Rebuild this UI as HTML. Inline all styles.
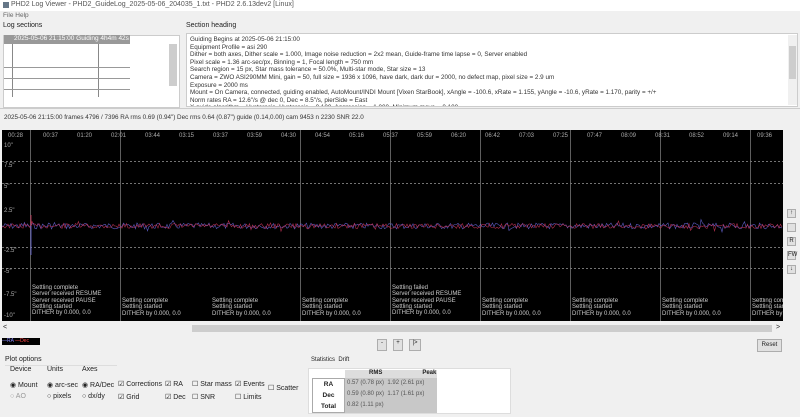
<!DOCTYPE html>
<html><head><style>
*{margin:0;padding:0;box-sizing:border-box}
body{width:800px;height:417px;background:#f0f0f0;font-family:"Liberation Sans",sans-serif;font-size:7px;color:#222;position:relative;overflow:hidden}
.a{position:absolute;white-space:nowrap}
.btn{position:absolute;background:#e1e1e1;border:1px solid #adadad;font-size:6px;text-align:center}
.tl{position:absolute;left:190px;font-size:6.3px;line-height:7.6px;color:#333;height:70px;overflow:hidden;width:595px}
.ev{position:absolute;color:#ccc;font-size:6px;line-height:6.3px;white-space:nowrap}
</style></head><body>
<div class="a" style="left:0;top:0;width:800px;height:11px;background:#fff"></div>
<div class="a" style="left:3px;top:2px;width:6px;height:6px;background:#678"></div>
<div class="a" style="left:11px;top:1px;font-size:7px;color:#555">PHD2 Log Viewer - PHD2_GuideLog_2025-05-06_204035_1.txt - PHD2 2.6.13dev2 [Linux]</div>
<div class="a" style="left:3px;top:12px;font-size:6.5px;color:#666">File Help</div>
<div class="a" style="left:3px;top:22px;font-size:7px">Log sections</div>
<div class="a" style="left:3px;top:35px;width:177px;height:73px;background:#fff;border:1px solid #ccc"></div>
<div class="a" style="left:4px;top:35px;width:126px;height:9px;background:#999;color:#fff;font-size:6.5px;padding-left:10px">2025-05-06 21:15:00 Guiding 4h4m 42s</div>
<div class="a" style="left:12px;top:44px;width:1px;height:53px;background:#888"></div>
<div class="a" style="left:98px;top:44px;width:1px;height:53px;background:#888"></div>
<div class="a" style="left:4px;top:67px;width:126px;height:1px;background:#999"></div>
<div class="a" style="left:4px;top:78px;width:126px;height:1px;background:#999"></div>
<div class="a" style="left:4px;top:89px;width:126px;height:1px;background:#999"></div>
<div class="a" style="left:169px;top:44px;width:8px;height:42px;background:#cdcdcd"></div>
<div class="a" style="left:186px;top:22px;font-size:7px">Section heading</div>
<div class="a" style="left:186px;top:33px;width:612px;height:74px;background:#fff;border:1px solid #ccc"></div>
<div class="a" style="left:788px;top:35px;width:9px;height:70px;background:#f0f0f0"></div>
<div class="a" style="left:789px;top:46px;width:7px;height:33px;background:#cdcdcd"></div>
<div class="tl" style="top:36px">Guiding Begins at 2025-05-06 21:15:00<br>Equipment Profile = asi 290<br>Dither = both axes, Dither scale = 1.000, Image noise reduction = 2x2 mean, Guide-frame time lapse = 0, Server enabled<br>Pixel scale = 1.36 arc-sec/px, Binning = 1, Focal length = 750 mm<br>Search region = 15 px, Star mass tolerance = 50.0%, Multi-star mode, Star size = 13<br>Camera = ZWO ASI290MM Mini, gain = 50, full size = 1936 x 1096, have dark, dark dur = 2000, no defect map, pixel size = 2.9 um<br>Exposure = 2000 ms<br>Mount = On Camera, connected, guiding enabled, AutoMount/INDI Mount [Vixen StarBook], xAngle = -100.6, xRate = 1.155, yAngle = -10.6, yRate = 1.170, parity = +/+<br>Norm rates RA = 12.6"/s @ dec 0, Dec = 8.5"/s, pierSide = East<br>X guide algorithm = Hysteresis, Hysteresis = 0.100, Aggression = 1.000, Minimum move = 0.100</div>
<div class="a" style="left:0;top:108px;width:800px;height:1px;background:#ccc"></div>
<div class="a" style="left:4px;top:114px;font-size:6.3px;color:#333">2025-05-06 21:15:00 frames 4796 / 7396 RA rms 0.69 (0.94") Dec rms 0.64 (0.87") guide (0.14,0.00) cam 9453 n 2230 SNR 22.0</div>
<svg class="a" style="left:2px;top:130px" width="781" height="191" viewBox="0 0 781 191">
<rect width="781" height="191" fill="#000"/>
<g stroke="#999" stroke-width="0.8" stroke-dasharray="2,2">
<line x1="0" y1="31.5" x2="781" y2="31.5"/><line x1="0" y1="53.5" x2="781" y2="53.5"/><line x1="0" y1="117.5" x2="781" y2="117.5"/><line x1="0" y1="138.5" x2="781" y2="138.5"/></g>
<g stroke="#777" stroke-width="0.8"><line x1="28.5" y1="0" x2="28.5" y2="191"/><line x1="118.5" y1="0" x2="118.5" y2="191"/><line x1="298.5" y1="0" x2="298.5" y2="191"/><line x1="388.5" y1="0" x2="388.5" y2="191"/><line x1="478.5" y1="0" x2="478.5" y2="191"/><line x1="568.5" y1="0" x2="568.5" y2="191"/><line x1="658.5" y1="0" x2="658.5" y2="191"/><line x1="748.5" y1="0" x2="748.5" y2="191"/></g>
<g fill="#aaa" font-size="6" font-family="Liberation Sans">
<text x="6" y="7">00:28</text><text x="41" y="7">00:37</text><text x="75" y="7">01:20</text><text x="109" y="7">02:01</text><text x="143" y="7">03:44</text><text x="177" y="7">03:15</text><text x="211" y="7">03:37</text><text x="245" y="7">03:59</text><text x="279" y="7">04:30</text><text x="313" y="7">04:54</text><text x="347" y="7">05:16</text><text x="381" y="7">05:37</text><text x="415" y="7">05:59</text><text x="449" y="7">06:20</text><text x="483" y="7">06:42</text><text x="517" y="7">07:03</text><text x="551" y="7">07:25</text><text x="585" y="7">07:47</text><text x="619" y="7">08:09</text><text x="653" y="7">08:31</text><text x="687" y="7">08:52</text><text x="721" y="7">09:14</text><text x="755" y="7">09:36</text>
<text x="2" y="17">10"</text><text x="2" y="37">7.5"</text><text x="2" y="58">5"</text><text x="2" y="82">2.5"</text><text x="2" y="122">-2.5"</text><text x="2" y="143">-5"</text><text x="2" y="166">-7.5"</text><text x="2" y="187">-10"</text></g>
<polyline id="b" fill="none" stroke="#6a6ae0" stroke-width="0.6" opacity="0.85"/>
<polyline id="r" fill="none" stroke="#d0355a" stroke-width="0.6" opacity="0.85"/>
<line x1="29" y1="96" x2="29" y2="125" stroke="#6a6ae0" stroke-width="0.8"/>
<line x1="29" y1="85" x2="29" y2="96" stroke="#d0355a" stroke-width="0.8"/>
</svg>
<script>
function g(id,s,a){var p=[],x=s;for(var i=0;i<=781;i+=1.5){x=(x*9301+49297)%233280;var v=(x/233280-0.5)*a;if(x%29==0)v*=2.2;p.push(i.toFixed(1)+','+(96+v).toFixed(1));}document.getElementById(id).setAttribute('points',p.join(' '));}
g('b',7,6);g('r',13,5);
</script>
<div class="ev" style="left:32px;top:285px">Settling complete<br>Server received RESUME<br>Server received PAUSE<br>Settling started<br>DITHER by 0.000, 0.0</div>
<div class="ev" style="left:122px;top:298px">Settling complete<br>Settling started<br>DITHER by 0.000, 0.0</div>
<div class="ev" style="left:212px;top:298px">Settling complete<br>Settling started<br>DITHER by 0.000, 0.0</div>
<div class="ev" style="left:302px;top:298px">Settling complete<br>Settling started<br>DITHER by 0.000, 0.0</div>
<div class="ev" style="left:392px;top:285px">Settling failed<br>Server received RESUME<br>Server received PAUSE<br>Settling started<br>DITHER by 0.000, 0.0</div>
<div class="ev" style="left:482px;top:298px">Settling complete<br>Settling started<br>DITHER by 0.000, 0.0</div>
<div class="ev" style="left:572px;top:298px">Settling complete<br>Settling started<br>DITHER by 0.000, 0.0</div>
<div class="ev" style="left:662px;top:298px">Settling complete<br>Settling started<br>DITHER by 0.000, 0.0</div>
<div class="ev" style="left:752px;top:298px;width:31px;overflow:hidden">Settling comp<br>Settling start<br>DITHER by 0</div>
<div class="btn" style="left:787px;top:209px;width:9px;height:9px">↑</div>
<div class="btn" style="left:787px;top:223px;width:9px;height:9px"></div>
<div class="btn" style="left:787px;top:237px;width:9px;height:9px">R</div>
<div class="btn" style="left:787px;top:251px;width:9px;height:9px">FW</div>
<div class="btn" style="left:787px;top:265px;width:9px;height:9px">↓</div>
<div class="a" style="left:3px;top:324px">&lt;</div>
<div class="a" style="left:192px;top:325px;width:580px;height:7px;background:#cdcdcd"></div>
<div class="a" style="left:776px;top:324px">&gt;</div>
<div class="a" style="left:2px;top:338px;width:38px;height:7px;background:#000;font-size:5px;color:#fff;line-height:7px"><span style="color:#88f">—RA</span> <span style="color:#f44">—Dec</span></div>
<div class="btn" style="left:377px;top:339px;width:10px;height:12px">-</div>
<div class="btn" style="left:393px;top:339px;width:10px;height:12px">+</div>
<div class="btn" style="left:409px;top:339px;width:12px;height:12px">|&gt;</div>
<div class="btn" style="left:757px;top:339px;width:25px;height:13px;line-height:11px">Reset</div>
<div class="a" style="left:5px;top:356px">Plot options</div>
<div class="a" style="left:5px;top:365px;width:112px;height:1px;background:#ddd"></div>
<div class="a" style="left:10px;top:366px">Device</div><div class="a" style="left:47px;top:366px">Units</div><div class="a" style="left:82px;top:366px">Axes</div>
<div class="a" style="left:10px;top:381px">◉ Mount</div><div class="a" style="left:10px;top:393px;color:#999">○ AO</div>
<div class="a" style="left:47px;top:381px">◉ arc-sec</div><div class="a" style="left:47px;top:393px">○ pixels</div>
<div class="a" style="left:82px;top:381px">◉ RA/Dec</div><div class="a" style="left:82px;top:393px">○ dx/dy</div>
<div class="a" style="left:118px;top:380px">☑ Corrections</div><div class="a" style="left:118px;top:393px">☑ Grid</div>
<div class="a" style="left:165px;top:380px">☑ RA</div><div class="a" style="left:165px;top:393px">☑ Dec</div>
<div class="a" style="left:192px;top:380px">☐ Star mass</div><div class="a" style="left:192px;top:393px">☐ SNR</div>
<div class="a" style="left:235px;top:380px">☑ Events</div><div class="a" style="left:235px;top:393px">☐ Limits</div>
<div class="a" style="left:268px;top:384px">☐ Scatter</div>
<div class="a" style="left:311px;top:357px;font-size:6px">Statistics&nbsp; Drift</div>
<div class="a" style="left:308px;top:368px;width:203px;height:46px;background:#fff;border:1px solid #ddd"></div>
<div class="a" style="left:312px;top:370px;width:125px;height:43px;font-size:6.5px">
<div class="a" style="left:33px;top:0;width:92px;height:8px;background:#ddd;font-weight:bold;font-size:6px"><span style="margin-left:24px">RMS</span><span style="margin-left:40px">Peak</span></div>
<div class="a" style="left:0;top:8px;width:33px;height:35px;border:1px solid #aaa;font-weight:bold;text-align:center;line-height:11px">RA<br>Dec<br>Total</div>
<div class="a" style="left:33px;top:8px;width:92px;height:35px;background:#c8c8c8;line-height:11px;color:#555;font-size:6px;padding-left:2px">0.57 (0.78 px)&nbsp; 1.92 (2.61 px)<br>0.59 (0.80 px)&nbsp; 1.17 (1.61 px)<br>0.82 (1.11 px)</div>
</div>
</body></html>
